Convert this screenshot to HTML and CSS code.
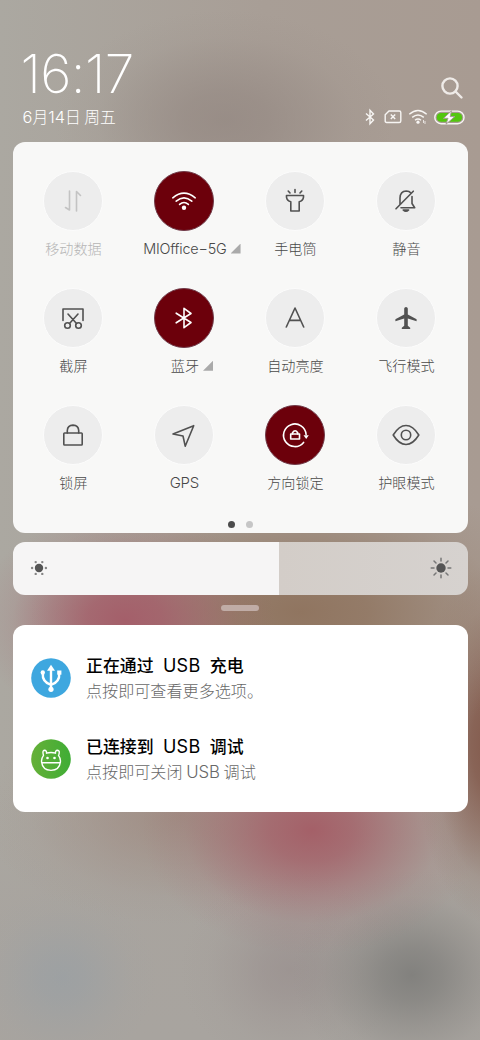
FILE: index.html
```html
<!DOCTYPE html>
<html lang="zh-CN">
<head>
<meta charset="utf-8">
<title>控制中心</title>
<link rel="stylesheet" href="styles.css">
</head>
<body>
<main class="shade">
  <header class="header">
    <div>
      <div class="clock">16:17</div>
      <div class="date"><span>6</span>月<span>14</span>日 周五</div>
    </div>
    <div class="header-right">
      <svg class="search" width="24" height="24" viewBox="0 0 24 24"><circle cx="10" cy="10" r="7.6"/><path d="M15.5 15.5L21.5 21.5"/></svg>
      <div class="status">
        <svg class="line" width="12" height="18" viewBox="0 0 12 18"><path d="M2 5.5L9.5 12 6 15.7V2.3L9.5 6 2 12.5"/></svg>
        <svg class="line sim" width="18" height="14" viewBox="0 0 18 14"><path d="M5 1H15.2Q16.8 1 16.8 2.6V11Q16.8 12.5 15.2 12.5H2.6Q1.2 12.5 1.2 11V4.8ZM6.8 4.5L11.2 9M11.2 4.5L6.8 9"/></svg>
        <svg class="line wifi-small" width="20" height="16" viewBox="0 0 20 16"><path d="M1.3 5.3Q10-2.3 18.7 5.3M4.2 8.4Q10 3.4 15.8 8.4M7 11.2Q10 8.7 13 11.2"/><circle class="solid" cx="10" cy="13.2" r="1.6"/><path class="tiny" d="M15.5 11V14M17 12V15"/></svg>
        <svg class="battery" width="31" height="15" viewBox="0 0 31 15"><rect x=".8" y="1.1" width="29.2" height="12.6" rx="6.3" fill="none" stroke="#f7f5f3" stroke-width="1.4"/><rect x="2.7" y="3" width="25.4" height="8.8" rx="4.4" fill="#53c60f"/><path d="M17.5.8L9.5 8.3H14L12 14.2L20.8 6.6H16.2Z" fill="#fff" stroke="#a69c94" stroke-width="1"/></svg>
      </div>
    </div>
  </header>

  <section class="panel">
    <div class="tiles">
      <div class="tile disabled"><div class="circle"><svg viewBox="0 0 30 30"><path d="M11.5 5V24L7.5 21.5M18.5 25V5.5L22.5 9.5"/></svg></div><div class="label">移动数据</div></div>
      <div class="tile on"><div class="circle"><svg viewBox="0 0 30 30"><path d="M3.8 11.8Q15 2.5 26.2 11.8M7.2 15.2Q15 8.5 22.8 15.2M10.6 18.4Q15 14.6 19.4 18.4"/><circle class="solid" cx="15" cy="21.8" r="2.2"/></svg></div><div class="label wifi-label"><span class="latin">MIOffice−5G</span><i class="corner"></i></div></div>
      <div class="tile"><div class="circle"><svg viewBox="0 0 30 30"><path d="M6.5 9.5H23.5V11.2Q23 15 19.2 15.8V25H10.8V15.8Q7 15 6.5 11.2ZM15 3.5V6.5M8.2 5L10 7M21.8 5L20 7"/></svg></div><div class="label">手电筒</div></div>
      <div class="tile"><div class="circle"><svg viewBox="0 0 30 30"><path d="M5 22.8L22.3 5.2M9 18.5V12Q9.2 5.2 15.2 5Q18.3 5 20 7M21 10.5V17.5L23.7 21.8H10M12.2 24Q14.9 26.5 17.6 24Z"/></svg></div><div class="label">静音</div></div>

      <div class="tile"><div class="circle"><svg viewBox="0 0 30 30"><path d="M5 17.5V6H25V17.5M10 11L18.5 20.5M20 11L11.5 20.5"/><circle cx="9.5" cy="22.5" r="2.8"/><circle cx="20.5" cy="22.5" r="2.8"/></svg></div><div class="label">截屏</div></div>
      <div class="tile on"><div class="circle"><svg viewBox="0 0 30 30"><path d="M7.2 10.2L22 19.5 15 24.7V5.3L22 10.5 7.2 19.8"/></svg></div><div class="label bt-label">蓝牙<i class="corner"></i></div></div>
      <div class="tile"><div class="circle"><svg viewBox="0 0 30 30"><path d="M6.3 24L15 5L23.7 24M9.4 17.4H20.6"/></svg></div><div class="label">自动亮度</div></div>
      <div class="tile"><div class="circle"><svg viewBox="0 0 30 30"><path class="solid" d="M13.2 5.5Q13.4 3.9 15 3.9T16.8 5.5V11.5L25.6 16.3V18.3L16.8 15.5V22.8L19.2 24.8V26H10.8V24.8L13.2 22.8V15.5L4.4 18.3V16.3L13.2 11.5Z"/></svg></div><div class="label">飞行模式</div></div>

      <div class="tile"><div class="circle"><svg viewBox="0 0 30 30"><rect x="5.8" y="13" width="18.4" height="12" rx=".8"/><path d="M9.3 13V10.5Q9.5 5.3 15 5.1Q20.5 5.3 20.7 10.5V13"/></svg></div><div class="label">锁屏</div></div>
      <div class="tile"><div class="circle"><svg viewBox="0 0 30 30"><path d="M4 14L24.7 5.7L16.2 26.2L14 16Z"/></svg></div><div class="label latin">GPS</div></div>
      <div class="tile on"><div class="circle"><svg viewBox="0 0 30 30"><path d="M23.6 22.4A11.3 11.3 0 1 1 26.1 14.5"/><path class="solid" d="M23.5 15.3H28.8L26.2 19Z"/><rect x="10.7" y="14" width="8.8" height="5"/><path d="M12.5 14V12.8Q15.1 8.8 17.7 12.8V14"/></svg></div><div class="label">方向锁定</div></div>
      <div class="tile"><div class="circle"><svg viewBox="0 0 30 30"><path d="M2.2 15Q8 5.5 15 5.5T27.8 15Q22 24.5 15 24.5T2.2 15Z"/><circle cx="15" cy="15" r="4.7"/></svg></div><div class="label">护眼模式</div></div>
    </div>
    <div class="dots"><i class="current"></i><i></i></div>
  </section>

  <section class="brightness">
    <svg width="18" height="18" viewBox="0 0 18 18"><circle cx="9" cy="9" r="4.2"/><g class="rays"><circle cx="2.1" cy="9" r="1.2"/><circle cx="15.9" cy="9" r="1.2"/><circle cx="5.7" cy="3.1" r="1.2"/><circle cx="12.3" cy="3.1" r="1.2"/><circle cx="5.7" cy="14.9" r="1.2"/><circle cx="12.3" cy="14.9" r="1.2"/></g></svg>
    <svg width="22" height="22" viewBox="0 0 22 22"><circle cx="11" cy="11" r="4.7"/><path d="M11 1.2V4M11 18V20.8M1.2 11H4M18 11H20.8M4 4L6 6M16 16L18 18M18 4L16 6M6 16L4 18"/></svg>
  </section>

  <div class="handle"></div>

  <section class="notices">
    <article class="notice">
      <svg class="app" width="40" height="40" viewBox="0 0 40 40"><circle cx="20" cy="20" r="19.8" fill="#3ea7df"/><g fill="none" stroke="#fff" stroke-width="2.4" stroke-linecap="round"><path d="M20 11V32M11.8 15Q11 24 20 26.8Q29 24 28.2 15"/></g><path d="M20 6.8L24 12.8H16Z" fill="#fff"/><circle cx="11.8" cy="14.5" r="2.2" fill="#fff"/><rect x="26.2" y="12.5" width="4.2" height="4.2" fill="#fff"/><circle cx="20" cy="31.3" r="2.6" fill="#fff"/></svg>
      <div><h2>正在通过 <span class="usb">USB</span> 充电</h2><p>点按即可查看更多选项。</p></div>
    </article>
    <article class="notice">
      <svg class="app" width="40" height="40" viewBox="0 0 40 40"><defs><linearGradient id="leaf"><stop stop-color="#66b038"/><stop offset="1" stop-color="#3fad35"/></linearGradient></defs><circle cx="20" cy="20" r="19.8" fill="url(#leaf)"/><g fill="none" stroke="#fff" stroke-width="1.4" stroke-linejoin="round"><path d="M15.5 14.2Q20 12.8 24.5 14.2Q24.2 11.5 26.5 11.3Q29 11.5 28 15.2L27.5 16.3Q29.5 19 29.5 22Q29 31 20 31.4Q11 31 10.5 22Q10.5 19 12.5 16.3Q11 11.5 13.5 11.3Q15.8 11.5 15.5 14.2ZM10.6 23.7H29.4"/></g><circle cx="16.5" cy="19" r="1.3" fill="#fff"/><circle cx="23.5" cy="19" r="1.3" fill="#fff"/></svg>
      <div><h2>已连接到 <span class="usb">USB</span> 调试</h2><p>点按即可关闭 <span class="usb-small">USB</span> 调试</p></div>
    </article>
  </section>
</main>
</body>
</html>
```
FILE: styles.css
```css
* { box-sizing: border-box; }
body { margin: 0; font-family: "Noto Sans CJK SC", sans-serif; }
svg { display: block; flex: none; overflow: visible; }

.shade {
  width: 480px;
  height: 1040px;
  overflow: hidden;
  padding: 48px 12.5px 0;
  background:
    radial-gradient(ellipse 170px 110px at 225px 120px, #938781c0, #938781a0 25%, #93878160 50%, #9387811c 75%, #93878100),
    radial-gradient(ellipse 150px 110px at 125px 620px, #a45f6a, #a45f6ad8 25%, #a45f6a80 50%, #a45f6a24 75%, #a45f6a00),
    radial-gradient(ellipse 270px 140px at 300px 612px, #907560, #907560d8 25%, #90756080 50%, #90756024 75%, #90756000),
    radial-gradient(ellipse 75px 180px at 490px 745px, #835a4c, #835a4cd8 25%, #835a4c80 50%, #835a4c24 75%, #835a4c00),
    radial-gradient(ellipse 170px 125px at 312px 830px, #a46068, #a46068c8 25%, #a4606870 50%, #a460681e 75%, #a4606800),
    radial-gradient(ellipse 120px 105px at 412px 975px, #82817e, #82817ec0 25%, #82817e68 50%, #82817e1c 75%, #82817e00),
    radial-gradient(ellipse 110px 100px at 290px 970px, #988e8db0, #988e8d88 25%, #988e8d48 50%, #988e8d14 75%, #988e8d00),
    radial-gradient(ellipse 95px 90px at 62px 978px, #989fa4b0, #989fa488 25%, #989fa448 50%, #989fa414 75%, #989fa400),
    radial-gradient(ellipse 200px 110px at 180px 815px, #a08d84, #a08d84b0 25%, #a08d8460 50%, #a08d841c 75%, #a08d8400),
    linear-gradient(0deg, #a8a49f, #a8a49fe0 130px, #a8a49f00 260px),
    linear-gradient(90deg, #aba8a1, #a89e96 55%, #a89b92);
}

.header { height: 94px; display: flex; justify-content: space-between; padding: 0 3px 0 10px; color: #fff; }
.clock { height: 54px; font: 200 53.5px/52px Inter, sans-serif; letter-spacing: -.6px; margin-left: -2px; white-space: nowrap; }
.date { margin-top: 4px; height: 22px; font-size: 15.8px; line-height: 22px; font-weight: 300; white-space: nowrap; }
.date span { font-family: Inter, sans-serif; font-size: 16.4px; }
.header-right { padding-top: 28px; }
.search { margin-left: auto; margin-right: 1px; fill: none; stroke: #efebe8; stroke-width: 2.4; stroke-linecap: round; }
.status { display: flex; align-items: center; height: 18px; margin-top: 8px; }
.line { fill: none; stroke: #f7f5f3; stroke-width: 1.4; }
.line .solid { fill: #f7f5f3; stroke: none; }
.line .tiny { stroke-width: .8; }
.sim { margin-left: 8.5px; }
.wifi-small { margin-left: 5.5px; }
.battery { margin-left: 6px; }

.panel { height: 391px; border-radius: 12px; background: #f8f8f7; padding: 28.5px 5.4px 0; }
.tiles { display: grid; grid-template-columns: repeat(4, 111px); grid-auto-rows: 117.3px; }
.tile { display: flex; flex-direction: column; align-items: center; color: #484848; }
.circle { width: 60px; height: 60px; border-radius: 50%; border: 1.5px solid #fcfcfc; background: #ededed; display: grid; place-items: center; }
.circle svg { width: 30px; height: 30px; fill: none; stroke: #515151; stroke-width: 1.6; stroke-linejoin: round; stroke-linecap: round; }
.circle .solid { fill: #515151; stroke: none; }
.on .circle { background: #6c000b; border: 1px solid #713c4a; }
.on .circle svg { stroke: #fff; }
.on .circle .solid { fill: #fff; }
.disabled { color: #b5b5b5; }
.disabled .circle svg { stroke: #c3c3c3; }
.label { display: flex; align-items: baseline; height: 24px; margin-top: 5px; font-size: 14.1px; line-height: 24px; font-weight: 300; white-space: nowrap; }
.latin { font-family: Inter, sans-serif; font-size: 14.4px; letter-spacing: -.2px; }
.label.latin { margin-top: 6px; font-size: 15px; }
.corner { width: 10px; height: 10px; margin-left: 4px; background: #aaa; clip-path: polygon(100% 0, 100% 100%, 0 100%); }
.wifi-label { margin-left: 15px; margin-top: 6px; }
.bt-label { margin-left: 15px; }
.dots { display: flex; justify-content: center; gap: 11px; margin-top: -1.5px; }
.dots i { width: 7px; height: 7px; border-radius: 50%; background: #c6c6c6; }
.dots .current { background: #4c4c4c; }

.brightness { height: 53px; margin-top: 8.5px; padding: 0 16px 0 17.5px; border-radius: 12px; display: flex; justify-content: space-between; align-items: center; background: linear-gradient(90deg, #f6f5f5 0 266.5px, #d3cdc8 266.5px, #d6d2cf); }
.brightness svg { fill: #555; stroke: #777; stroke-width: 1.5; stroke-linecap: round; }
.brightness circle { stroke: none; }
.brightness .rays { fill: #858585; }
.handle { width: 38px; height: 6px; margin: 10.5px auto 0; border-radius: 3px; background: #c0aca6; }

.notices { height: 187px; margin-top: 14px; padding: 22px 18.5px; border-radius: 12px; background: #fff; }
.notice { height: 81px; display: flex; gap: 15px; }
.app { margin-top: 11px; }
h2 { margin: 5px 0 0; height: 26px; font-size: 16.9px; line-height: 25px; font-weight: 500; color: #000; white-space: nowrap; }
p { margin: 0; height: 25px; font-size: 16.1px; line-height: 25px; font-weight: 300; color: #686868; white-space: nowrap; }
.usb { font: 400 18px/25px Inter, sans-serif; margin: 0 5.5px; letter-spacing: .3px; }
.usb-small { font: 300 16.8px/25px Inter, sans-serif; }
```
